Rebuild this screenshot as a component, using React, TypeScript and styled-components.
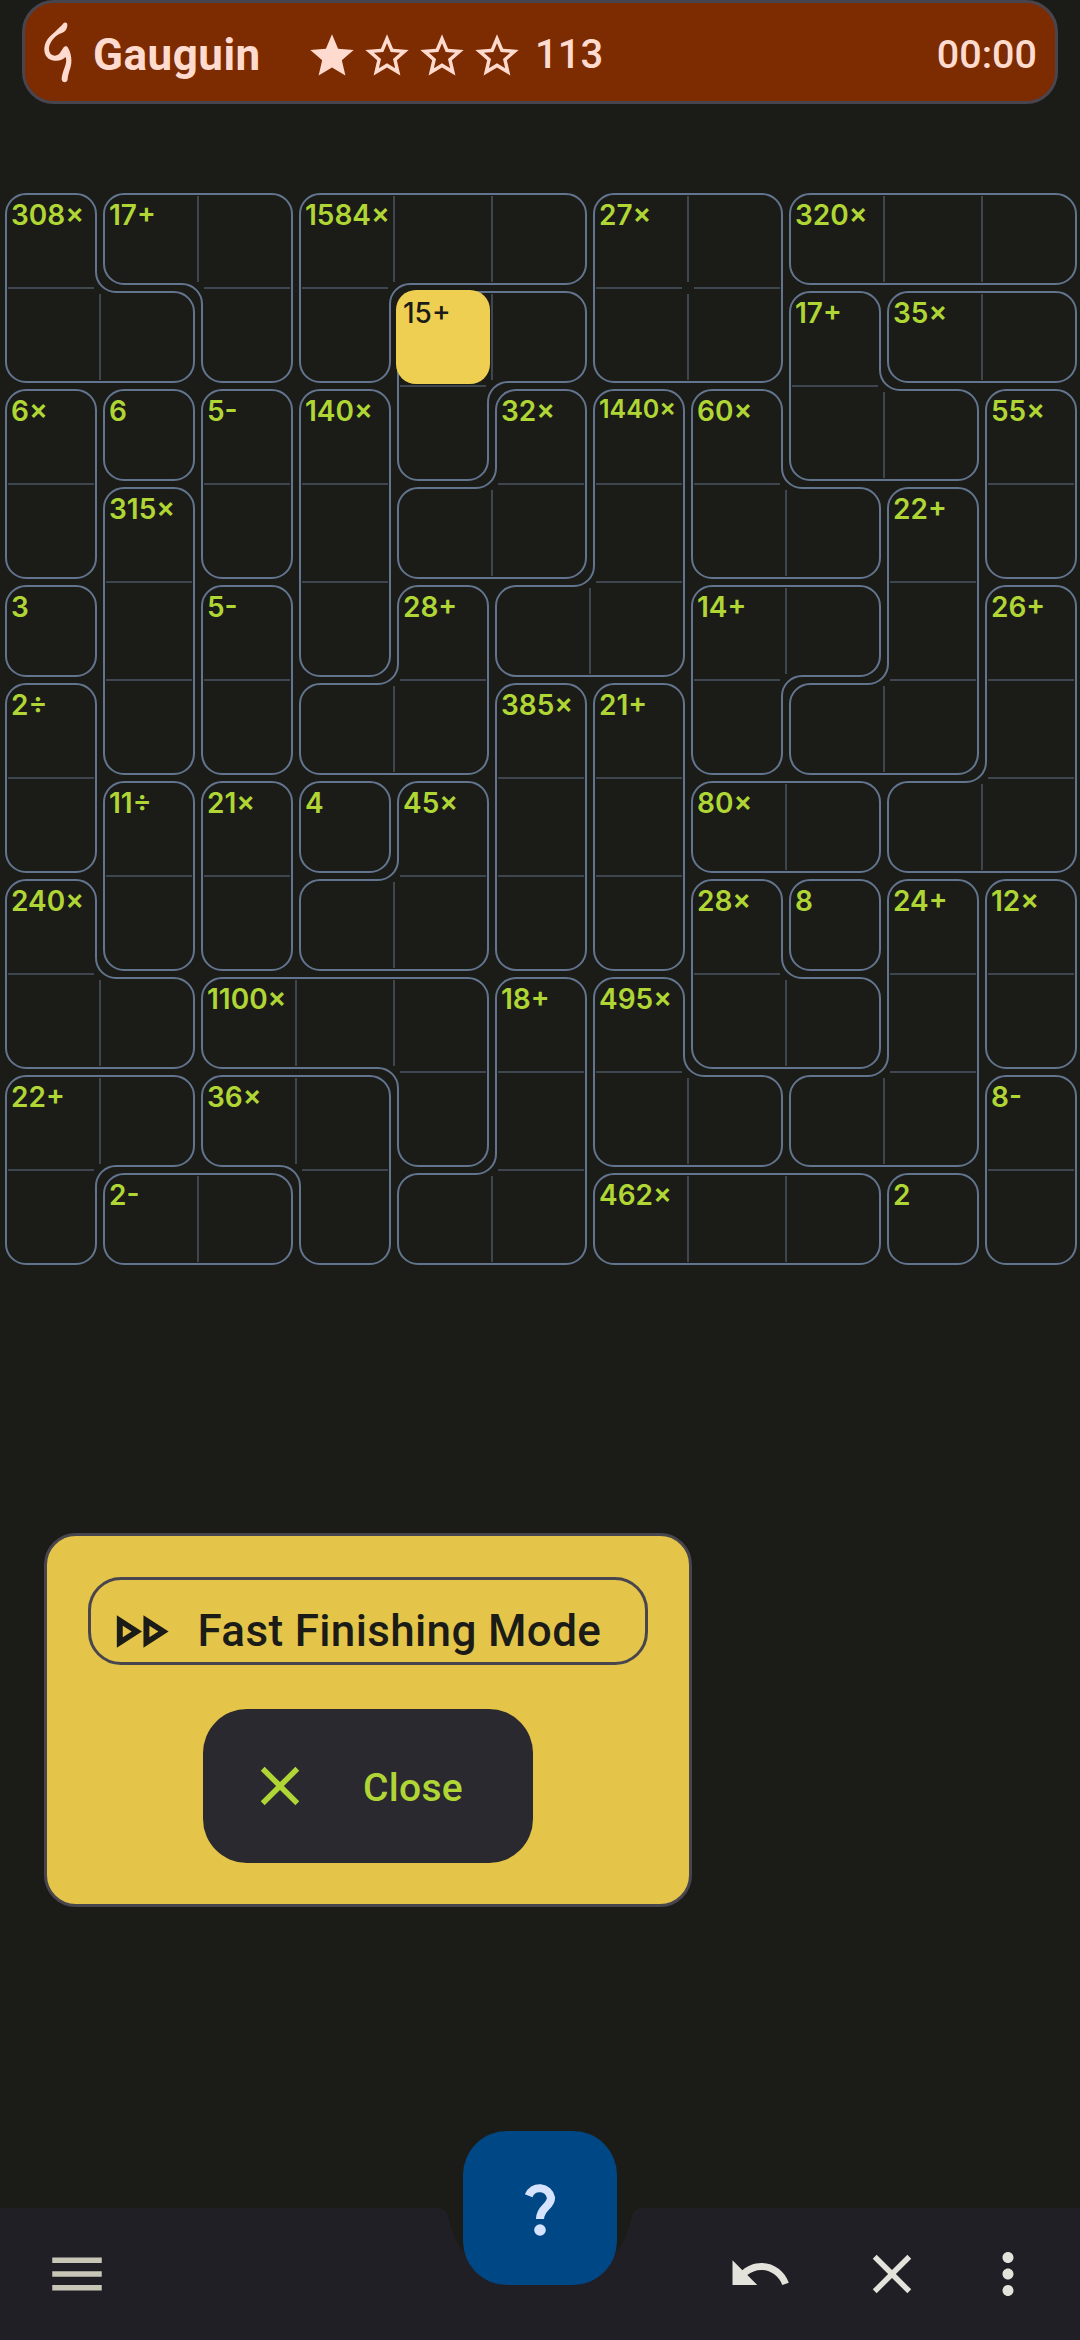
import React from "react";
import styled, { createGlobalStyle } from "styled-components";

const CELL = 98;
const SIZE = 11;
const INSET = 4;
const RADIUS = 20;

const CAGES = [
  "ABBCCCDDEEE",
  "AABCFFDDGHH",
  "IJKLFMNOGGP",
  "IQKLMMNOORP",
  "SQTLUNNVVRW",
  "XQTUUYZVRRW",
  "XabcdYZeeWW",
  "fabddYZghij",
  "ffkkklmggij",
  "nnooklmmiip",
  "nqqollrrrsp",
];

const LABELS: Record<string, string> = {
  A: "308×", B: "17+", C: "1584×", D: "27×", E: "320×", F: "15+", G: "17+", H: "35×",
  I: "6×", J: "6", K: "5-", L: "140×", M: "32×", N: "1440×", O: "60×", P: "55×",
  Q: "315×", R: "22+", S: "3", T: "5-", U: "28+", V: "14+", W: "26+", X: "2÷",
  Y: "385×", Z: "21+", a: "11÷", b: "21×", c: "4", d: "45×", e: "80×", f: "240×",
  g: "28×", h: "8", i: "24+", j: "12×", k: "1100×", l: "18+", m: "495×", n: "22+",
  o: "36×", p: "8-", q: "2-", r: "462×", s: "2",
};

const SELECTED = { row: 1, col: 4 };

const cageAt = (row: number, col: number) => CAGES[row]?.[col];

type Edge = { x: number; y: number; dx: number; dy: number };

/** Walks the border of a cage clockwise and returns its rounded outline. */
function cageOutline(id: string): string {
  const edges: Edge[] = [];
  for (let r = 0; r < SIZE; r++) {
    for (let c = 0; c < SIZE; c++) {
      if (cageAt(r, c) !== id) continue;
      if (cageAt(r - 1, c) !== id) edges.push({ x: c, y: r, dx: 1, dy: 0 });
      if (cageAt(r, c + 1) !== id) edges.push({ x: c + 1, y: r, dx: 0, dy: 1 });
      if (cageAt(r + 1, c) !== id) edges.push({ x: c + 1, y: r + 1, dx: -1, dy: 0 });
      if (cageAt(r, c - 1) !== id) edges.push({ x: c, y: r + 1, dx: 0, dy: -1 });
    }
  }
  const first = edges[0];
  let current = first;
  const parts: string[] = [];
  do {
    const vx = current.x + current.dx;
    const vy = current.y + current.dy;
    const next = edges.find((e) => e.x === vx && e.y === vy)!;
    if (next.dx !== current.dx || next.dy !== current.dy) {
      const px = vx * CELL + INSET * (-current.dy - next.dy);
      const py = vy * CELL + INSET * (current.dx + next.dx);
      const convex = next.dx === -current.dy && next.dy === current.dx;
      parts.push(
        `${parts.length ? "L" : "M"}${px - RADIUS * current.dx} ${py - RADIUS * current.dy}`,
        `A${RADIUS} ${RADIUS} 0 0 ${convex ? 1 : 0} ${px + RADIUS * next.dx} ${py + RADIUS * next.dy}`
      );
    }
    current = next;
  } while (current !== first);
  return parts.join("") + "Z";
}

/** Thin separators between neighbouring cells of the same cage. */
function innerLines(): string {
  let d = "";
  for (let r = 0; r < SIZE; r++) {
    for (let c = 0; c < SIZE; c++) {
      const id = cageAt(r, c);
      if (cageAt(r, c + 1) === id) d += `M${(c + 1) * CELL} ${r * CELL + 6}v${CELL - 12}`;
      if (cageAt(r + 1, c) === id) d += `M${c * CELL + 6} ${(r + 1) * CELL}h${CELL - 12}`;
    }
  }
  return d;
}

const cageIds = Object.keys(LABELS);

const cells = CAGES.flatMap((line, row) =>
  [...line].map((id, col) => {
    const isFirst = CAGES.join("").indexOf(id) === row * SIZE + col;
    return { row, col, label: isFirst ? LABELS[id] : "" };
  })
);

const GlobalStyle = createGlobalStyle`
  * { box-sizing: border-box; }
  body { margin: 0; background: #1b1c17; }
`;

const Screen = styled.div`
  display: flex;
  flex-direction: column;
  width: 1080px;
  height: 2340px;
  overflow: hidden;
  background: #1b1c17;
  font-family: Roboto, sans-serif;
`;

const Header = styled.header`
  display: flex;
  align-items: center;
  height: 104px;
  margin: 0 22px;
  padding: 0 18px;
  border: 3px solid #49454f;
  border-radius: 32px;
  background: #7d2b00;
  color: #ffdbcf;
`;

const Title = styled.h1`
  margin: 6px 0 0 20px;
  width: 213px;
  font-size: 44px;
  line-height: 52px;
  font-weight: 700;
  letter-spacing: 0.5px;
`;

const Stars = styled.div`
  display: flex;
  gap: 3px;
  margin-top: 7px;
`;

const HeaderText = styled.span`
  margin-top: 6px;
  font-size: 40px;
  line-height: 48px;
  font-weight: 500;
`;

const Difficulty = styled(HeaderText)`
  margin-left: 12px;
`;

const Timer = styled(HeaderText)`
  margin-left: auto;
  font-size: 39.5px;
`;

const Board = styled.main`
  position: relative;
  display: grid;
  grid-template-columns: repeat(${SIZE}, ${CELL}px);
  grid-auto-rows: ${CELL}px;
  width: ${CELL * SIZE}px;
  margin: 86px 0 0 2px;
`;

const CageLines = styled.svg`
  position: absolute;
  inset: 0;
  fill: none;
  stroke-width: 2;
`;

const Cell = styled.div<{ $selected: boolean; $small: boolean }>`
  position: relative;
  margin: 2px;
  padding: ${(p) => (p.$small ? "4px 0 0 7px" : "6px 0 0 7px")};
  border-radius: 20px;
  background: ${(p) => (p.$selected ? "#eecf52" : "transparent")};
  color: ${(p) => (p.$selected ? "#1b1c17" : "#b0d636")};
  font-family: Inter, sans-serif;
  font-size: ${(p) => (p.$small ? 25 : 28)}px;
  line-height: 34px;
  font-weight: ${(p) => (p.$selected ? 500 : 600)};
  white-space: nowrap;
`;

const Card = styled.section`
  display: flex;
  flex-direction: column;
  align-items: center;
  gap: 44px;
  width: 648px;
  height: 374px;
  margin: 265px 0 0 44px;
  padding-top: 41px;
  border: 3px solid #49454f;
  border-radius: 32px;
  background: #e4c549;
`;

const ModeBanner = styled.div`
  display: flex;
  align-items: center;
  gap: 21.5px;
  width: 560px;
  height: 88px;
  padding: 20px 0 0 14px;
  border: 3px solid #49454f;
  border-radius: 33px;
  color: #1b1c17;
  font-size: 44px;
  line-height: 52px;
  font-weight: 500;
  letter-spacing: 0.35px;
  white-space: nowrap;
`;

const CloseButton = styled.button`
  display: flex;
  align-items: center;
  gap: 50px;
  width: 330px;
  height: 154px;
  padding: 0 0 0 44px;
  border: 0;
  border-radius: 44px;
  background: #2b2930;
  color: #b0d636;
  font: 500 39px/48px Roboto, sans-serif;
  letter-spacing: 0.3px;
`;

const CloseLabel = styled.span`
  padding-top: 3px;
`;

const BottomBar = styled.footer`
  position: relative;
  display: flex;
  align-items: center;
  height: 132px;
  margin-top: auto;
  padding: 0 39px 0 44px;
  background: #211f26;
  color: #e3e3db;
`;

const Notch = styled.svg`
  position: absolute;
  top: 0;
  left: 436px;
`;

const Actions = styled.div`
  display: flex;
  margin-left: auto;
`;

const IconButton = styled.button<{ $gap?: number; $color?: string }>`
  display: flex;
  margin: 0 0 0 ${(p) => p.$gap ?? 0}px;
  padding: 0;
  border: 0;
  background: none;
  color: ${(p) => p.$color ?? "inherit"};
`;

const HelpFab = styled.button`
  position: absolute;
  top: -77px;
  left: 463px;
  width: 154px;
  height: 154px;
  padding: 0;
  border: 0;
  border-radius: 44px;
  background: #004786;
`;

type IconProps = { d: string; width: number; height?: number };

const Icon = ({ d, width, height = width }: IconProps) => (
  <svg width={width} height={height} viewBox="0 0 24 24" preserveAspectRatio="none" fill="currentColor">
    <path d={d} />
  </svg>
);

const PATHS = {
  star: "M12 17.27L18.18 21l-1.64-7.03L22 9.24l-7.19-.61L12 2 9.19 8.63 2 9.24l5.46 4.73L5.82 21z",
  starOutline:
    "M22 9.24l-7.19-.62L12 2 9.19 8.63 2 9.24l5.46 4.73L5.82 21 12 17.27 18.18 21l-1.63-7.03L22 9.24zM12 15.4l-3.76 2.27 1-4.28-3.32-2.88 4.38-.38L12 6.1l1.71 4.04 4.38.38-3.32 2.88 1 4.28L12 15.4z",
  forward:
    "M15 9.86L18.03 12 15 14.14V9.86M6 9.86L9.03 12 6 14.14V9.86M13 6v12l8.5-6L13 6zM4 6v12l8.5-6L4 6z",
  close: "M19 6.41L17.59 5 12 10.59 6.41 5 5 6.41 10.59 12 5 17.59 6.41 19 12 13.41 17.59 19 19 17.59 13.41 12z",
  menu: "M3 6h18v2H3zM3 11h18v2H3zM3 16h18v2H3z",
  undo: "M12.5 8C9.85 8 7.45 9 5.6 10.6L2 7v9h9l-3.62-3.62c1.39-1.16 3.16-1.88 5.12-1.88 3.54 0 6.55 2.31 7.6 5.5l2.37-.78C21.08 11.03 17.15 8 12.5 8z",
  more: "M12 8c1.1 0 2-.9 2-2s-.9-2-2-2-2 .9-2 2 .9 2 2 2zm0 2c-1.1 0-2 .9-2 2s.9 2 2 2 2-.9 2-2-.9-2-2-2zm0 6c-1.1 0-2 .9-2 2s.9 2 2 2 2-.9 2-2-.9-2-2-2z",
};

const Logo = () => (
  <svg width="30" height="62" viewBox="20 20 90 186" fill="currentColor">
    <path d="M80 28C84 22 93 23 93 31C93 46 84 54 70 58C54 66 40 84 38 100C37 114 44 124 56 124C70 124 74 110 82 99C86 95 92 95 95 100C103 114 106 128 105 145C103 165 95 175 94 195C93 206 77 207 76 195C76 178 86 160 89 145C90 138 90 134 88 128C80 136 68 141 54 139C34 137 23 122 24 102C26 72 50 60 62 46C70 38 76 34 80 28Z" />
  </svg>
);

export default function App() {
  return (
    <Screen>
      <GlobalStyle />
      <Header>
        <Logo />
        <Title>Gauguin</Title>
        <Stars>
          <Icon d={PATHS.star} width={52} />
          <Icon d={PATHS.starOutline} width={52} />
          <Icon d={PATHS.starOutline} width={52} />
          <Icon d={PATHS.starOutline} width={52} />
        </Stars>
        <Difficulty>113</Difficulty>
        <Timer>00:00</Timer>
      </Header>

      <Board>
        <CageLines width={CELL * SIZE} height={CELL * SIZE}>
          <path d={innerLines()} stroke="#3e474f" />
          {cageIds.map((id) => (
            <path key={id} d={cageOutline(id)} stroke="#62748e" />
          ))}
        </CageLines>
        {cells.map(({ row, col, label }) => (
          <Cell
            key={`${row}-${col}`}
            $selected={row === SELECTED.row && col === SELECTED.col}
            $small={label === "1440×"}
          >
            {label}
          </Cell>
        ))}
      </Board>

      <Card>
        <ModeBanner>
          <Icon d={PATHS.forward} width={71} height={65} />
          Fast Finishing Mode
        </ModeBanner>
        <CloseButton>
          <Icon d={PATHS.close} width={66} />
          <CloseLabel>Close</CloseLabel>
        </CloseButton>
      </Card>

      <BottomBar>
        <Notch width="208" height="48" viewBox="0 0 208 48" fill="#1b1c17">
          <path d="M0 0C8 0 11.500 4 12.500 10Q16 30 29 46H179Q192 30 195.500 10C196.500 4 200 0 208 0Z" />
        </Notch>
        <IconButton $color="#c8c7b7" aria-label="Menu">
          <Icon d={PATHS.menu} width={66} />
        </IconButton>
        <Actions>
          <IconButton aria-label="Undo">
            <Icon d={PATHS.undo} width={66} />
          </IconButton>
          <IconButton $gap={66.5} aria-label="Clear">
            <Icon d={PATHS.close} width={66} />
          </IconButton>
          <IconButton $gap={50} aria-label="More">
            <Icon d={PATHS.more} width={66} />
          </IconButton>
        </Actions>
        <HelpFab aria-label="Help">
          <svg width="154" height="154" viewBox="189 63 462 462" fill="none">
            <path d="M386 257A35 35 0 0 1 453 263C453 290 420 292 420 327" stroke="#d6e3ff" strokeWidth="24.5" />
            <circle cx="420" cy="360" r="17.5" fill="#d6e3ff" />
          </svg>
        </HelpFab>
      </BottomBar>
    </Screen>
  );
}
